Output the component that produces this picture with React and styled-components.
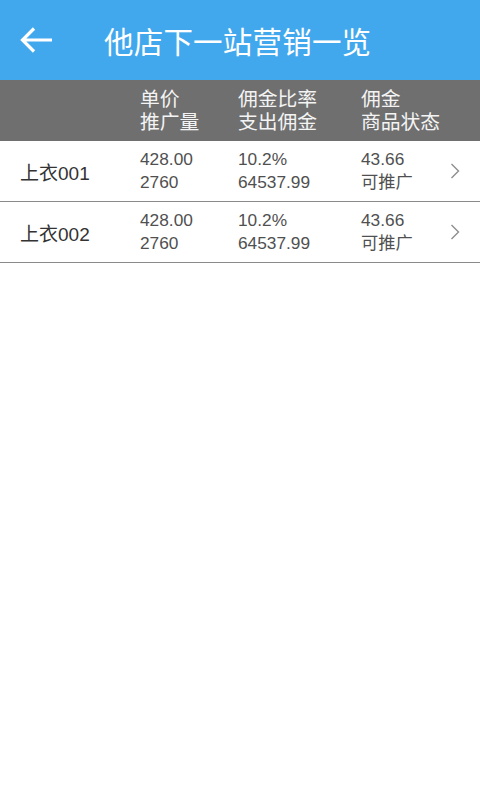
import React from 'react';
import styled, { createGlobalStyle } from 'styled-components';

const GlobalStyle = createGlobalStyle`
  html, body {
    margin: 0;
    padding: 0;
    background: #fff;
  }
  body {
    font-family: "Liberation Sans", "Noto Sans CJK SC", sans-serif;
  }
`;

const Page = styled.div`
  width: 480px;
  min-height: 800px;
  background: #fff;
`;

const TopBar = styled.header`
  height: 80px;
  background: #42a8ee;
  display: flex;
  align-items: center;
  padding-left: 20px;
  box-sizing: border-box;
`;

const BackButton = styled.button`
  border: 0;
  background: none;
  padding: 0;
  width: 32px;
  height: 26px;
  display: flex;
  align-items: center;
  cursor: pointer;
`;

const Title = styled.h1`
  margin: 0 0 0 52px;
  font-size: 29.5px;
  font-weight: normal;
  color: #fff;
  letter-spacing: 0.2px;
`;

const Grid = styled.div`
  display: grid;
  grid-template-columns: 120px 98px 123px 1fr 30px;
  align-items: center;
  padding: 0 14px 0 20px;
  box-sizing: border-box;
`;

const HeadRow = styled(Grid)`
  height: 61px;
  background: #6f6f6f;
  padding-top: 1px;
`;

const Row = styled(Grid)`
  height: 61px;
  border-bottom: 1px solid #8a8a8a;
`;

const Name = styled.div`
  font-size: 19px;
  color: #333;
`;

const Cell = styled.div`
  display: flex;
  flex-direction: column;
  font-size: ${({ $head }) => ($head ? '19.8px' : '17.3px')};
  line-height: 23px;
  color: ${({ $head }) => ($head ? '#f4f4f4' : '#505050')};
  white-space: nowrap;
`;

const Chevron = styled.div`
  display: flex;
  justify-content: flex-end;
  padding-right: 6px;
`;

const BackArrow = () => (
  <svg width="32" height="26" viewBox="0 0 32 26">
    <path d="M14 1.5 L2.5 13 L14 24.5 M2.5 13 H32" fill="none" stroke="#fff" strokeWidth="3.2" />
  </svg>
);

const ChevronIcon = () => (
  <svg width="10" height="16" viewBox="0 0 10 16">
    <path d="M1.5 1 L8.5 8 L1.5 15" fill="none" stroke="#8e8e8e" strokeWidth="1.4" />
  </svg>
);

const rows = [
  { name: '上衣001', price: '428.00', count: '2760', rate: '10.2%', spent: '64537.99', fee: '43.66', status: '可推广' },
  { name: '上衣002', price: '428.00', count: '2760', rate: '10.2%', spent: '64537.99', fee: '43.66', status: '可推广' },
];

const App = () => (
  <Page>
    <GlobalStyle />
    <TopBar>
      <BackButton>
        <BackArrow />
      </BackButton>
      <Title>他店下一站营销一览</Title>
    </TopBar>
    <HeadRow>
      <div />
      <Cell $head>
        <span>单价</span>
        <span>推广量</span>
      </Cell>
      <Cell $head>
        <span>佣金比率</span>
        <span>支出佣金</span>
      </Cell>
      <Cell $head>
        <span>佣金</span>
        <span>商品状态</span>
      </Cell>
      <div />
    </HeadRow>
    {rows.map((r) => (
      <Row key={r.name}>
        <Name>{r.name}</Name>
        <Cell>
          <span>{r.price}</span>
          <span>{r.count}</span>
        </Cell>
        <Cell>
          <span>{r.rate}</span>
          <span>{r.spent}</span>
        </Cell>
        <Cell>
          <span>{r.fee}</span>
          <span>{r.status}</span>
        </Cell>
        <Chevron>
          <ChevronIcon />
        </Chevron>
      </Row>
    ))}
  </Page>
);

export default App;
